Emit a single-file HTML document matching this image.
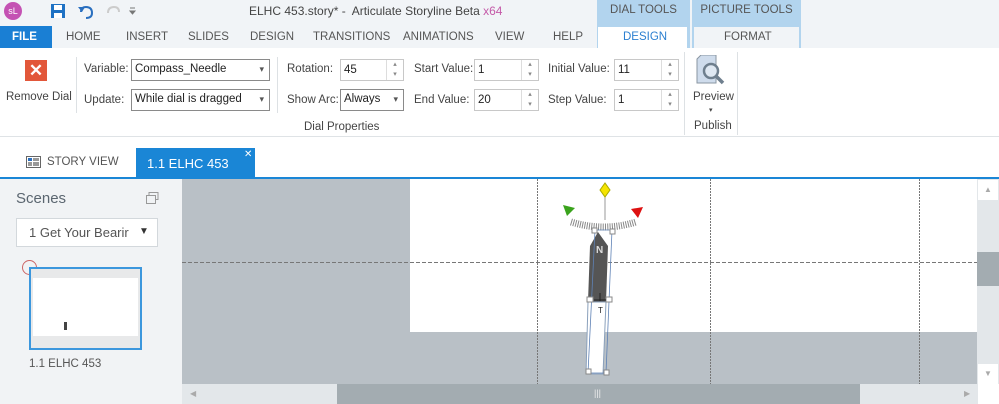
<!DOCTYPE html>
<html><head><meta charset="utf-8"><style>
*{margin:0;padding:0;box-sizing:border-box}
body{width:999px;height:404px;overflow:hidden;position:relative;font-family:"Liberation Sans",sans-serif;font-size:11.5px;color:#444;background:#fff}
.a{position:absolute;white-space:nowrap}
.box{position:absolute;border:1px solid #8a8a8a;background:#fff;height:22px;padding:3px 3px;font-size:11.5px;color:#222}
.spin{position:absolute;border:1px solid #c8c8c8;background:#fff;height:22px;padding:4px 3px;font-size:11.5px;color:#222}
.spin:after{content:"▴\A▾";white-space:pre;position:absolute;right:0;top:0;width:16px;height:20px;border-left:1px solid #ddd;font-size:7px;line-height:10px;text-align:center;color:#888}
.dd:after{content:"▾";position:absolute;right:5px;top:4px;font-size:9px;color:#555}
.tab{position:absolute;top:31px;font-size:11.5px;color:#555}
.sep{position:absolute;width:1px;background:#dde1e4}
</style></head><body>
<div class="a" style="left:0;top:0;width:999px;height:48px;background:#f1f4f7"></div>
<div class="a" style="left:4px;top:2px;width:18px;height:18px;border-radius:50%;background:#c452b3;color:#fff;font-size:9px;text-align:center;line-height:18px">sL</div>
<svg class="a" style="left:50px;top:3px" width="90" height="16"><rect x="1" y="1" width="14" height="14" fill="#1f72c4"/><rect x="4" y="2" width="8" height="5" fill="#fff"/><rect x="4" y="10" width="8" height="5" fill="#fff"/><path d="M31 9 q0-5 5-5 q6 0 6 6 q0 5-6 5" stroke="#2a6fbf" stroke-width="2" fill="none"/><path d="M28 4 l4 5 l3-5z" fill="#2a6fbf"/><path d="M69 9 q0-5-5-5 q-6 0-6 6" stroke="#ccc" stroke-width="2" fill="none"/><path d="M80 5h5M80 8l2.5 3 2.5-3z" stroke="#777" fill="#777"/></svg>
<div class="a" style="left:249px;top:4px;font-size:12px;color:#444">ELHC 453.story* -&nbsp; Articulate Storyline Beta <span style="color:#c45aa8">x64</span></div>
<div class="a" style="left:597px;top:0;width:93px;height:48px;background:#b2d4ee"></div>
<div class="a" style="left:692px;top:0;width:109px;height:48px;background:#b2d4ee"></div>
<div class="a" style="left:597px;top:4px;width:93px;text-align:center;color:#555">DIAL TOOLS</div>
<div class="a" style="left:692px;top:4px;width:109px;text-align:center;color:#555">PICTURE TOOLS</div>
<div class="a" style="left:598px;top:27px;width:89px;height:21px;background:#fff"></div>
<div class="a" style="left:694px;top:27px;width:105px;height:21px;background:#f1f4f7"></div>
<div class="a" style="left:0;top:26px;width:52px;height:22px;background:#1a7fd4"></div>
<div class="tab" style="left:12px;color:#fff;font-weight:bold">FILE</div>
<div class="tab" style="left:66px">HOME</div><div class="tab" style="left:126px">INSERT</div><div class="tab" style="left:188px">SLIDES</div><div class="tab" style="left:250px">DESIGN</div><div class="tab" style="left:313px">TRANSITIONS</div><div class="tab" style="left:403px">ANIMATIONS</div><div class="tab" style="left:495px">VIEW</div><div class="tab" style="left:553px">HELP</div><div class="tab" style="left:623px;color:#2b7fd0">DESIGN</div><div class="tab" style="left:724px">FORMAT</div>
<div class="a" style="left:0;top:48px;width:999px;height:89px;border-bottom:1px solid #dfe3e6"></div>
<div class="a" style="left:25px;top:60px;width:22px;height:21px;background:#e2573a;color:#fff;font-weight:bold;font-size:17px;text-align:center;line-height:21px">✕</div>
<div class="a" style="left:6px;top:91px">Remove Dial</div>
<div class="sep" style="left:76px;top:57px;height:56px"></div>
<div class="a" style="left:84px;top:63px">Variable:</div><div class="box dd" style="left:131px;top:59px;width:139px">Compass_Needle</div>
<div class="a" style="left:84px;top:94px">Update:</div><div class="box dd" style="left:131px;top:89px;width:139px">While dial is dragged</div>
<div class="sep" style="left:277px;top:57px;height:56px"></div>
<div class="a" style="left:287px;top:63px">Rotation:</div><div class="spin" style="left:340px;top:59px;width:64px">45</div>
<div class="a" style="left:287px;top:94px">Show Arc:</div><div class="box dd" style="left:340px;top:89px;width:64px">Always</div>
<div class="a" style="left:414px;top:63px">Start Value:</div><div class="spin" style="left:474px;top:59px;width:65px">1</div>
<div class="a" style="left:414px;top:94px">End Value:</div><div class="spin" style="left:474px;top:89px;width:65px">20</div>
<div class="a" style="left:548px;top:63px">Initial Value:</div><div class="spin" style="left:614px;top:59px;width:65px">11</div>
<div class="a" style="left:548px;top:94px">Step Value:</div><div class="spin" style="left:614px;top:89px;width:65px">1</div>
<div class="a" style="left:304px;top:121px">Dial Properties</div>
<div class="sep" style="left:684px;top:52px;height:83px"></div>
<svg class="a" style="left:695px;top:55px" width="34" height="34"><path d="M2 4 l4-4 h15 v28 h-19z" fill="#cfdcec" stroke="#8a96a2"/><circle cx="16" cy="16" r="7" fill="#dfe8f2" stroke="#6f7f8e" stroke-width="2.5"/><path d="M21 21 l7 7" stroke="#6f7f8e" stroke-width="3.5"/></svg>
<div class="a" style="left:693px;top:91px">Preview</div>
<div class="a" style="left:709px;top:106px;font-size:7px">▾</div>
<div class="a" style="left:694px;top:120px">Publish</div>
<div class="sep" style="left:737px;top:52px;height:83px"></div>
<svg class="a" style="left:26px;top:156px" width="15" height="12"><rect x=".5" y=".5" width="14" height="11" fill="#fff" stroke="#666"/><rect x="2" y="2" width="4" height="3" fill="#2a6fbf"/><rect x="7" y="2" width="6" height="3" fill="#999"/><rect x="2" y="6" width="4" height="4" fill="#999"/><rect x="7" y="6" width="6" height="4" fill="#999"/></svg>
<div class="a" style="left:47px;top:156px;color:#555">STORY VIEW</div>
<div class="a" style="left:136px;top:148px;width:119px;height:30px;background:#1a86d6"></div>
<div class="a" style="left:147px;top:156px;color:#fff;font-size:13px">1.1 ELHC 453</div>
<div class="a" style="left:244px;top:149px;color:#fff;font-size:10px">✕</div>
<div class="a" style="left:0;top:177px;width:999px;height:2px;background:#1a86d6"></div>
<div class="a" style="left:0;top:179px;width:182px;height:225px;background:#f1f3f5"></div>
<div class="a" style="left:16px;top:190px;font-size:15px;color:#5b6670">Scenes</div>
<svg class="a" style="left:146px;top:192px" width="13" height="12"><rect x="3" y=".5" width="9" height="7" fill="none" stroke="#999"/><rect x=".5" y="3.5" width="9" height="8" fill="#f1f3f5" stroke="#999"/></svg>
<div class="a" style="left:16px;top:218px;width:142px;height:29px;background:#fff;border:1px solid #d3d8dc"></div>
<div class="a" style="left:29px;top:225px;font-size:13px;color:#555">1 Get Your Bearir</div>
<div class="a" style="left:139px;top:226px;font-size:10px;color:#333">▼</div>
<div class="a" style="left:22px;top:260px;width:15px;height:15px;border-radius:50%;border:1px solid #c66"></div>
<div class="a" style="left:29px;top:267px;width:113px;height:83px;border:2px solid #3c97dd;background:#e8e9ea"></div>
<div class="a" style="left:33px;top:278px;width:105px;height:58px;background:#fff"></div>
<div class="a" style="left:64px;top:322px;width:3px;height:8px;background:#444"></div>
<div class="a" style="left:29px;top:358px;color:#555">1.1 ELHC 453</div>
<div class="a" style="left:182px;top:179px;width:795px;height:205px;background:#b9c0c6"></div>
<div class="a" style="left:410px;top:179px;width:567px;height:153px;background:#fff"></div>
<div class="a" style="left:182px;top:384px;width:795px;height:20px;background:#e3e7ea"></div>
<div class="a" style="left:337px;top:384px;width:523px;height:20px;background:#a3acb1"></div>
<div class="a" style="left:594px;top:388px;color:#eee;font-size:9px">|||</div>
<div class="a" style="left:190px;top:389px;color:#aaa;font-size:8px">◀</div>
<div class="a" style="left:964px;top:389px;color:#aaa;font-size:8px">▶</div>
<div class="a" style="left:977px;top:179px;width:22px;height:225px;background:#e3e7ea"></div>
<div class="a" style="left:978px;top:180px;width:20px;height:20px;background:#fff;color:#aaa;font-size:8px;text-align:center;line-height:20px">▲</div>
<div class="a" style="left:977px;top:252px;width:22px;height:34px;background:#a3acb1"></div>
<div class="a" style="left:978px;top:364px;width:20px;height:20px;background:#fff;color:#aaa;font-size:8px;text-align:center;line-height:20px">▼</div>
<div class="a" style="left:978px;top:384px;width:21px;height:20px;background:#fff"></div>
<svg class="a" style="left:0;top:0" width="999" height="404">
<g stroke="#777" stroke-width="1" stroke-dasharray="2,1"><path d="M537.5 179v205M710.5 179v205M919.5 179v205"/></g>
<path d="M182 262.5h795" stroke="#777" stroke-dasharray="4,2"/>
<path d="M605 192v28" stroke="#999"/>
<path d="M600 190l5-7 5 7-5 7z" fill="#f5e400" stroke="#aa0"/>
<path d="M563 205l12 3-8 8z" fill="#3aa31c"/><path d="M643 207l-12 2 7 9z" fill="#d11"/>
<path d="M571 222 Q604 232 636 222" stroke="#888" stroke-width="7" fill="none" stroke-dasharray="1,1.3"/>
<path d="M598 232 l10 14 -2 56 -18 0 2 -56z" fill="#555"/>
<text x="596" y="253" fill="#ddd" font-size="10" font-weight="bold">N</text>
<path d="M588 302h18l-3 72h-17z" fill="#fff" stroke="#8aa0bb"/>
<path d="M595 230h17l-6 143h-18z" fill="none" stroke="#5f82b5" stroke-width=".8"/>
<g fill="#fff" stroke="#888"><rect x="592" y="228" width="5" height="5"/><rect x="610" y="229" width="5" height="5"/><rect x="587" y="297" width="6" height="5"/><rect x="606" y="297" width="6" height="5"/><rect x="586" y="369" width="5" height="5"/><rect x="604" y="370" width="5" height="5"/></g>
<text x="598" y="313" font-size="8" fill="#222">T</text>
<path d="M600 293v8M594 300h12" stroke="#222"/>
</svg>
</body></html>
